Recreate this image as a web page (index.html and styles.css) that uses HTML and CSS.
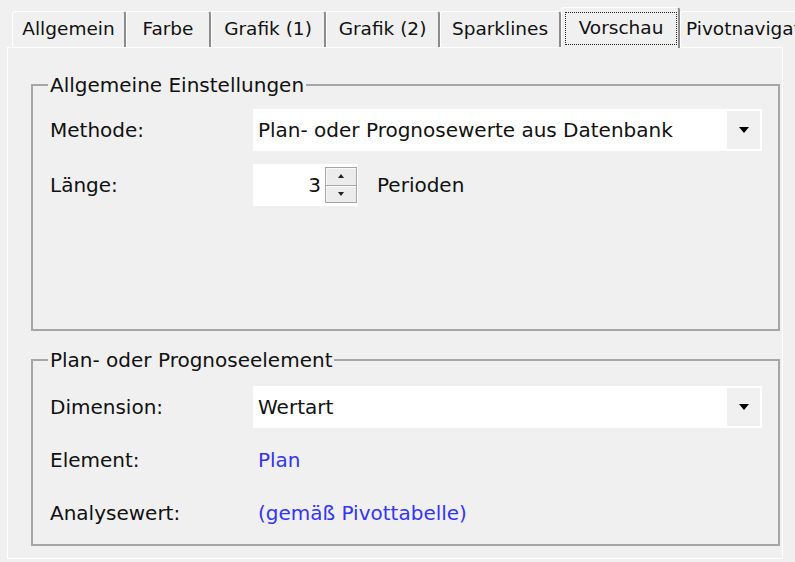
FILE: index.html
```html
<!DOCTYPE html>
<html lang="de">
<head>
    <meta charset="UTF-8">
    <title>Vorschau</title>
    <link rel="stylesheet" href="styles.css">
</head>
<body>

    <div class="dialog">
        <div class="tabs">
            <div class="tab tab-general">Allgemein</div>
            <div class="tab tab-color">Farbe</div>
            <div class="tab tab-chart1">Grafik (1)</div>
            <div class="tab tab-chart2">Grafik (2)</div>
            <div class="tab tab-spark">Sparklines</div>
            <div class="tab tab-preview active"><span class="focus">Vorschau</span></div>
            <div class="tab tab-pivot">Pivotnavigation</div>
        </div>

        <div class="panel">
            <div class="group group-general">
                <div class="group-title">Allgemeine Einstellungen</div>
                <div class="fields">
                    <div class="row">
                        <div class="label">Methode:</div>
                        <div class="combo">
                            <span class="combo-value">Plan- oder Prognosewerte aus Datenbank</span>
                            <span class="combo-button"></span>
                        </div>
                    </div>
                    <div class="row">
                        <div class="label">Länge:</div>
                        <div class="spin">
                            <span class="spin-value">3</span>
                            <span class="spin-buttons">
                                <span class="spin-up"></span>
                                <span class="spin-down"></span>
                            </span>
                        </div>
                        <span class="unit">Perioden</span>
                    </div>
                </div>
            </div>

            <div class="group group-element">
                <div class="group-title">Plan- oder Prognoseelement</div>
                <div class="fields">
                    <div class="row">
                        <div class="label">Dimension:</div>
                        <div class="combo">
                            <span class="combo-value">Wertart</span>
                            <span class="combo-button"></span>
                        </div>
                    </div>
                    <div class="row">
                        <div class="label">Element:</div>
                        <span class="link">Plan</span>
                    </div>
                    <div class="row">
                        <div class="label">Analysewert:</div>
                        <span class="link">(gemäß Pivottabelle)</span>
                    </div>
                </div>
            </div>
        </div>
    </div>

</body>
</html>
```

FILE: styles.css
```css
body {
    margin: 0;
    background: #f0f0f0;
    font-family: "DejaVu Sans", Verdana, sans-serif;
    color: #111;
    overflow: hidden;
}

.dialog {
    width: 776px;
    margin-left: 7px;
}

/* tab strip */

.tabs {
    display: flex;
    align-items: flex-end;
    height: 47px;
    padding-left: 5px;
    white-space: nowrap;
    font-size: 18.5px;
}

.tab {
    flex-shrink: 0;
    height: 36px;
    line-height: 34px;
    text-align: center;
    border-top: 1px solid #fff;
    border-left: 1px solid #fff;
    border-right: 2px solid #8c8c8c;
    border-radius: 3px 3px 0 0;
    box-sizing: border-box;
    background: #f0f0f0;
}

.tab-general { width: 114px; }
.tab-color   { width: 85px; }
.tab-chart1  { width: 115px; }
.tab-chart2  { width: 114px; }
.tab-spark   { width: 121px; }
.tab-preview { width: 119px; }

.tab-pivot {
    text-align: left;
    padding-left: 5px;
}

.tab.active {
    position: relative;
    z-index: 1;
    height: 41px;
    margin-bottom: -1px;
    padding: 4px 1px 0 3px;
    line-height: normal;
}

.focus {
    display: block;
    height: 33px;
    line-height: 29px;
    border: 1px dotted #222;
    box-sizing: border-box;
}

/* page */

.panel {
    height: 512px;
    box-sizing: border-box;
    border: 1px solid #fff;
    padding: 36px 2px 0 23px;
    font-size: 20px;
}

.group {
    border: 2px solid #a6a6a6;
    padding: 0 16px 0 17px;
    box-sizing: border-box;
}

.group-general {
    height: 247px;
}

.group-element {
    height: 187px;
    margin-top: 28px;
}

.group-title {
    display: table;
    margin: -12px 0 0 -2px;
    padding: 0 2px;
    line-height: 22px;
    background: #f0f0f0;
}

.fields {
    display: flex;
    flex-direction: column;
    gap: 13px;
    margin-top: 13px;
}

.group-element .fields {
    gap: 11px;
    margin-top: 15px;
}

.row {
    display: flex;
    align-items: center;
    height: 42px;
}

.label {
    width: 203px;
    flex-shrink: 0;
}

/* combo box */

.combo {
    flex: 1;
    align-self: stretch;
    display: flex;
    align-items: center;
    padding-left: 5px;
    background: #fff;
}

.combo-value {
    flex: 1;
}

.combo-button {
    align-self: stretch;
    width: 33px;
    margin: 2px;
    background: #f0f0f0;
    display: flex;
    align-items: center;
    justify-content: center;
}

.combo-button::after {
    content: "";
    border-left: 5px solid transparent;
    border-right: 5px solid transparent;
    border-top: 6px solid #000;
}

/* spinner */

.spin {
    align-self: stretch;
    width: 105px;
    display: flex;
    align-items: center;
    background: #fff;
}

.spin-value {
    flex: 1;
    text-align: right;
    padding-right: 4px;
}

.spin-buttons {
    width: 32px;
    height: 36px;
    margin-right: 1px;
    display: flex;
    flex-direction: column;
}

.spin-up,
.spin-down {
    flex: 1;
    border: 1px solid #a6a6a6;
    box-shadow: inset 1px 1px 0 #fafafa;
    background: #ececec;
    display: flex;
    align-items: center;
    justify-content: center;
}

.spin-down {
    border-top: none;
}

.spin-up::after {
    content: "";
    border-left: 3px solid transparent;
    border-right: 3px solid transparent;
    border-bottom: 4px solid #222;
}

.spin-down::after {
    content: "";
    border-left: 3px solid transparent;
    border-right: 3px solid transparent;
    border-top: 4px solid #222;
}

.unit {
    margin-left: 19px;
}

.link {
    padding-left: 5px;
    color: #3434f4;
}
```
